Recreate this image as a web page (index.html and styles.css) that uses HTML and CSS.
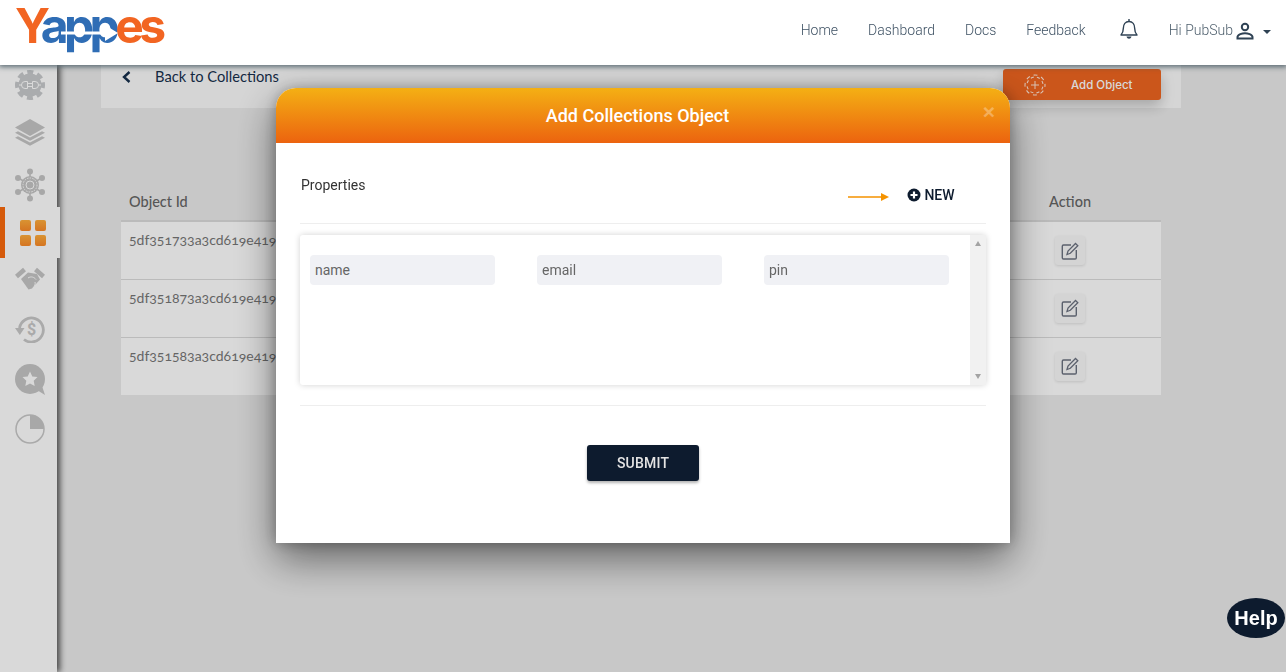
FILE: index.html
```html
<!DOCTYPE html>
<html lang="en">
<head>
<meta charset="utf-8">
<title>Yappes</title>
<link rel="stylesheet" href="styles.css">
</head>
<body>
<header class="topbar">
  <a class="logo"><span class="logo-o">Y</span><span class="logo-b">app</span><span class="logo-o">es</span>
    <svg class="logo-arrow" viewBox="0 0 60 18" width="60" height="18"><path d="M0 7.500h44V1l13 8-13 8v-6.500H0z" fill="#fff"/></svg>
  </a>
  <nav class="nav">
    <a>Home</a><a>Dashboard</a><a>Docs</a><a>Feedback</a>
  </nav>
  <svg class="bell" viewBox="0 0 20 22" width="20" height="22"><path d="M2 17c1.800-1.800 2.300-3 2.300-6.500C4.300 6.500 6.500 3.500 10 3.500s5.700 3 5.700 7c0 3.500.5 4.700 2.300 6.500z" fill="none" stroke="#2f4254" stroke-width="1.400" stroke-linejoin="round"/><path d="M10 1v2.500" stroke="#2f4254" stroke-width="1.400"/><path d="M7.500 18.500h5c-.5 1.500-1.300 2.200-2.500 2.200s-2-.7-2.500-2.200z" fill="#2f4254"/></svg>
  <div class="user">
    <span>Hi PubSub</span>
    <svg viewBox="0 0 18 18" width="18" height="18"><circle cx="9" cy="5" r="3.200" fill="none" stroke="#2f4254" stroke-width="2"/><path d="M1.500 16.500v-1.500c0-2.500 5-3.800 7.500-3.800s7.500 1.300 7.500 3.800v1.500z" fill="none" stroke="#2f4254" stroke-width="2"/></svg>
    <i class="caret"></i>
  </div>
</header>

<div class="shell">
  <aside class="sidebar">
    <div class="side-item">
      <svg viewBox="0 0 30 30" width="30" height="30"><circle cx="15" cy="15" r="11.500" fill="#c8cacd"/><circle cx="15" cy="15" r="12.500" fill="none" stroke="#c8cacd" stroke-width="5" stroke-dasharray="5.800 4" stroke-dashoffset="2.900"/><path d="M12.500 11.500H10a3.500 3.500 0 0 0 0 7h2.500zM17.500 11.500H20a3.500 3.500 0 0 1 0 7h-2.500zM12.500 13.500h5M12.500 16.500h5M4 15h2.500M23.500 15H26" fill="none" stroke="#fff" stroke-width="1"/></svg>
    </div>
    <div class="side-item">
      <svg viewBox="0 0 30 27" width="30" height="27"><path d="M15 0l15 8.500L15 17 0 8.500z" fill="#c6c6c6"/><path d="M3 12.200L0 13.800l15 8 15-8-3-1.600-12 6.400z" fill="#c6c6c6"/><path d="M3 17.200L0 18.800l15 8 15-8-3-1.600-12 6.400z" fill="#c6c6c6"/></svg>
    </div>
    <div class="side-item side-hub">
      <svg viewBox="0 0 30 34" width="30" height="34"><g stroke="#c6c6c6" stroke-width="1.600"><path d="M15 4v26M3.500 10l23 14M26.500 10l-23 14"/></g><g fill="#c6c6c6"><circle cx="15" cy="3.500" r="3"/><circle cx="15" cy="30.500" r="3"/><circle cx="3" cy="10" r="3"/><circle cx="27" cy="10" r="3"/><circle cx="3" cy="24" r="3"/><circle cx="27" cy="24" r="3"/></g><circle cx="15" cy="17" r="9" fill="#c6c6c6"/><circle cx="15" cy="17" r="7" fill="none" stroke="#fff" stroke-width="1" stroke-dasharray="1.500 1.200"/><circle cx="15" cy="17" r="4" fill="none" stroke="#fff" stroke-width="1"/></svg>
    </div>
    <div class="side-item side-active">
      <div class="squares"><i></i><i></i><i></i><i></i></div>
    </div>
    <div class="side-item">
      <svg viewBox="0 0 30 24" width="30" height="24"><path d="M1.500 9.500l8-7M28.500 9.500l-8-7" stroke="#c6c6c6" stroke-width="4.500" fill="none"/><path d="M6 12l7-6.500 9 1.500 3 5.500-8 9-3.500 1z" fill="#c6c6c6"/><path d="M13 11c3-2 6-1 8 1.500M18 21c2-2 2.500-4 2-6" fill="none" stroke="#fff" stroke-width="1"/></svg>
    </div>
    <div class="side-item">
      <svg viewBox="0 0 30 28" width="30" height="28"><path d="M4.500 13A12 12 0 1 1 9 24.500" fill="none" stroke="#c8c8c8" stroke-width="2.800"/><path d="M0 13h9.500l-4.700 7z" fill="#c8c8c8"/><text x="16.500" y="20" class="dollar">$</text></svg>
    </div>
    <div class="side-item">
      <svg viewBox="0 0 30 31" width="30" height="31"><circle cx="15" cy="15" r="15" fill="#c6c6c6"/><path d="M22 26l8 5-3-9z" fill="#c6c6c6"/><path d="M15 7.500l2.300 4.900 5.200.7-3.800 3.600 1 5.300-4.700-2.600-4.700 2.600 1-5.300-3.800-3.600 5.200-.7z" fill="#fff"/></svg>
    </div>
    <div class="side-item">
      <svg viewBox="0 0 30 30" width="30" height="30"><circle cx="15" cy="15" r="14" fill="none" stroke="#c8c8c8" stroke-width="1.500"/><path d="M15 1a14 14 0 0 1 14 14H15z" fill="#c6c6c6"/></svg>
    </div>
  </aside>

  <main class="content">
    <div class="backbar">
      <svg class="chev" viewBox="0 0 9 12" width="9" height="12"><path d="M7.500 1L2 6l5.500 5" fill="none" stroke="#17304d" stroke-width="2.400"/></svg>
      <span class="backlink">Back to Collections</span>
      <button class="add-btn">
        <svg viewBox="-11 -11 22 22" width="22" height="22"><circle r="10" fill="none" stroke="#ffe6d6" stroke-width="1.100" stroke-dasharray="3.900 4" stroke-dashoffset="2"/><circle r="8" fill="none" stroke="#ffe6d6" stroke-width="1.100" stroke-dasharray="3.100 3.200" stroke-dashoffset="-1.600"/><path d="M0-4v8M-4 0h8" stroke="#ffe6d6" stroke-width="1"/></svg>
        <span>Add Object</span>
      </button>
    </div>
    <table class="grid">
      <thead><tr><th>Object Id</th><th class="col-mid">Collection</th><th class="col-act">Action</th></tr></thead>
      <tbody>
        <tr><td>5df351733a3cd619e419</td><td></td><td class="col-act"><span class="edit"><svg viewBox="0 0 18 18" width="18" height="18"><path d="M10 3H2.500A1.200 1.200 0 0 0 1.300 4.200v11.600A1.200 1.200 0 0 0 2.500 17h11.600a1.200 1.200 0 0 0 1.200-1.200V8" fill="none" stroke="#6c7280" stroke-width="1.400"/><path d="M6 12.500l1-3.500 7.500-7.500 2.300 2.300L9.300 11.300z" fill="none" stroke="#6c7280" stroke-width="1.300"/></svg></span></td></tr>
        <tr><td>5df351873a3cd619e419</td><td></td><td class="col-act"><span class="edit"><svg viewBox="0 0 18 18" width="18" height="18"><path d="M10 3H2.500A1.200 1.200 0 0 0 1.300 4.200v11.600A1.200 1.200 0 0 0 2.500 17h11.600a1.200 1.200 0 0 0 1.200-1.200V8" fill="none" stroke="#6c7280" stroke-width="1.400"/><path d="M6 12.500l1-3.500 7.500-7.500 2.300 2.300L9.300 11.300z" fill="none" stroke="#6c7280" stroke-width="1.300"/></svg></span></td></tr>
        <tr><td>5df351583a3cd619e419</td><td></td><td class="col-act"><span class="edit"><svg viewBox="0 0 18 18" width="18" height="18"><path d="M10 3H2.500A1.200 1.200 0 0 0 1.300 4.200v11.600A1.200 1.200 0 0 0 2.500 17h11.600a1.200 1.200 0 0 0 1.200-1.200V8" fill="none" stroke="#6c7280" stroke-width="1.400"/><path d="M6 12.500l1-3.500 7.500-7.500 2.300 2.300L9.300 11.300z" fill="none" stroke="#6c7280" stroke-width="1.300"/></svg></span></td></tr>
      </tbody>
    </table>
  </main>
</div>

<div class="overlay">
  <section class="modal">
    <div class="modal-head">
      <h2>Add Collections Object</h2>
      <span class="close">×</span>
    </div>
    <div class="modal-body">
      <div class="prop-row">
        <span class="prop-label">Properties</span>
        <svg class="prop-arrow" viewBox="0 0 41 10" width="41" height="10"><path d="M0 4.300h33V1l8 4-8 4V5.700H0z" fill="#f59300"/></svg>
        <span class="new"><svg viewBox="0 0 14 14" width="14" height="14"><circle cx="7" cy="7" r="6.500" fill="#0d1b2e"/><path d="M7 3.500v7M3.500 7h7" stroke="#fff" stroke-width="2.200"/></svg>NEW</span>
      </div>
      <div class="fields">
        <div class="field-list">
          <input class="field" placeholder="name">
          <input class="field" placeholder="email">
          <input class="field" placeholder="pin">
        </div>
        <div class="scrollbar"><i class="arr-up"></i><i class="arr-down"></i></div>
      </div>
      <div class="actions"><button class="submit">SUBMIT</button></div>
    </div>
  </section>
</div>

<div class="help">Help</div>
</body>
</html>
```
FILE: styles.css
```css
* { box-sizing: border-box; }
html, body { margin: 0; height: 672px; overflow: hidden; }
body { background: #ececec; font-family: Roboto, "Liberation Sans", sans-serif; font-size: 14px; color: #333; }

.topbar { position: relative; z-index: 30; height: 65px; background: #fff; display: flex; align-items: center; box-shadow: 0 1px 5px 1px rgba(55,75,85,.75); padding: 0 15px 5px 0; }
.logo { position: relative; align-self: flex-start; margin-left: 15px; font-family: Inter, "Liberation Sans", sans-serif; font-weight: 700; font-size: 48px; letter-spacing: -4.600px; line-height: 52px; height: 52px; }
.logo-o { color: #f26522; }
.logo-b { color: #2f6db5; }
.logo-arrow { position: absolute; left: 46px; top: 24px; }
.nav { margin-left: auto; display: flex; gap: 30px; color: #3f5264; font-weight: 300; }
.bell { margin-left: 33px; margin-top: -2px; }
.user { margin-left: 30px; display: flex; align-items: center; color: #4d5e6c; font-weight: 300; }
.user svg { margin-left: 3px; margin-top: 2px; }
.caret { margin-left: 9px; margin-top: 3px; border: 4px solid transparent; border-top: 4px solid #2f4254; border-bottom: 0; }

.shell { display: flex; height: 607px; }
.sidebar { position: relative; z-index: 2; flex: 0 0 57px; background: #fff; box-shadow: 3px 0 6px 0 rgba(0,0,0,.65); display: grid; grid-template-columns: 57px; grid-template-rows: 40px 54px 48px 51px 42px 58px 42px 58px; align-content: start; }
.side-item { display: flex; align-items: center; justify-content: center; padding-left: 3px; }
.side-item svg { display: block; }
.side-hub { padding-top: 4px; }
.side-active { width: 60px; background: #fff; border-left: 5px solid #fb6a0e; height: 51px; padding-left: 0; position: relative; }
.squares { display: grid; grid-template-columns: 11px 11px; grid-auto-rows: 11px; gap: 4px; }
.squares i { background: linear-gradient(#ffae3c, #fb8a28); border-radius: 2px; }
.dollar { font: 700 16px Roboto, sans-serif; text-anchor: middle; fill: #c8c8c8; }

.content { flex: 1; padding: 0 105px 0 44px; }
.backbar { height: 43px; background: #fbfbfb; display: flex; align-items: flex-start; padding: 4px 20px 0 21px; position: relative; }
.chev { margin-top: 2px; }
.backlink { margin-left: 24px; font-family: Lato, "Open Sans", sans-serif; font-size: 14.7px; color: #17304d; line-height: 14px; }
.add-btn { margin-left: auto; width: 158px; height: 31px; border: 0; border-radius: 3px; background: #ef6520; color: #fff; display: flex; align-items: center; padding: 0 0 0 21px; box-shadow: 0 6px 14px rgba(0,0,0,.22); font-family: Inter, sans-serif; font-weight: 500; font-size: 11.500px; }
.add-btn span { margin-left: 25px; }

.grid { width: 1040px; margin: 73px 0 0 20px; border-collapse: collapse; table-layout: fixed; font-family: Lato, "Open Sans", sans-serif; }
.grid th { height: 40px; text-align: left; font-weight: 500; font-size: 14.5px; color: #666; padding: 2px 8px 0; border-bottom: 2px solid #dcdcdc; }
.grid td { height: 58px; background: #fff; border-bottom: 1px solid #dcdcdc; padding: 9px 8px 0; vertical-align: top; color: #777; font-size: 14px; font-feature-settings: "onum"; white-space: nowrap; overflow: hidden; }
.grid tr:last-child td { border-bottom: 0; }
.grid th.col-mid { width: 700px; }
.grid .col-act { width: 182px; text-align: center; padding-top: 14px; }
.grid th.col-act { padding-top: 2px; }
.edit { display: inline-flex; align-items: center; justify-content: center; width: 30px; height: 29px; background: #f9f9f9; border-radius: 3px; box-shadow: 0 1px 3px rgba(0,0,0,.12); }

.overlay { position: fixed; z-index: 10; top: 65px; left: 0; right: 0; bottom: 0; background: rgba(0,0,0,.15); padding: 23px 276px 0; }
.modal { width: 734px; height: 455px; background: #fff; border-radius: 20px 20px 0 0; box-shadow: 0 16px 40px rgba(0,0,0,.5), 0 0 14px rgba(0,0,0,.25); display: flex; flex-direction: column; }
.modal-head { position: relative; height: 55px; flex: none; border-radius: 20px 20px 0 0; background: linear-gradient(#f4b014, #ec630f); display: flex; align-items: center; justify-content: center; padding-right: 11px; }
.modal-head h2 { margin: 0; font-size: 18px; font-weight: 500; color: #fff; }
.close { position: absolute; right: 15px; top: 11px; font-size: 21px; font-weight: 700; line-height: 26px; color: #fff; opacity: .3; font-family: "Liberation Sans", sans-serif; }
.modal-body { padding: 0 24px; flex: 1; }
.prop-row { height: 81px; border-bottom: 1px solid #eeeeee; position: relative; display: flex; }
.prop-label { margin: 33px 0 0 1px; line-height: 18px; color: #333; }
.prop-arrow { margin: 49px 0 0 483px; }
.new { margin: 43px 0 0 18px; height: 18px; display: flex; align-items: center; gap: 3px; font-weight: 500; color: #0d1b2e; }
.fields { margin-top: 11px; height: 150px; display: flex; justify-content: space-between; border-radius: 3px; box-shadow: 0 0 6px rgba(0,0,0,.18); background: #fff; }
.field-list { display: flex; gap: 42px; padding: 20px 0 0 10px; align-items: flex-start; }
.field { width: 185px; height: 30px; border: 0; border-radius: 4px; background: #f0f1f5; padding: 0 5px; font: 14px Roboto, sans-serif; color: #333; outline: none; }
.field::placeholder { color: #666; opacity: 1; }
.scrollbar { width: 16px; background: #f1f1f1; display: flex; flex-direction: column; justify-content: space-between; align-items: center; padding: 6px 0; }
.arr-up { border: 3.500px solid transparent; border-bottom: 5px solid #a3a3a3; border-top: 0; }
.arr-down { border: 3.500px solid transparent; border-top: 5px solid #a3a3a3; border-bottom: 0; }
.actions { margin-top: 20px; border-top: 1px solid #eeeeee; padding-top: 39px; display: flex; justify-content: center; }
.submit { width: 112px; height: 36px; border: 0; border-radius: 3px; background: #0d1b2e; color: #e4e4e4; font: 500 14px Roboto, sans-serif; letter-spacing: .2px; box-shadow: 0 2px 3px rgba(0,0,0,.3); }

.help { position: fixed; z-index: 40; left: 1227px; top: 598px; width: 58px; height: 40px; border-radius: 50%; background: #0d1b2e; color: #fff; display: flex; align-items: center; justify-content: center; font: 700 20px "Liberation Sans", sans-serif; }
```
